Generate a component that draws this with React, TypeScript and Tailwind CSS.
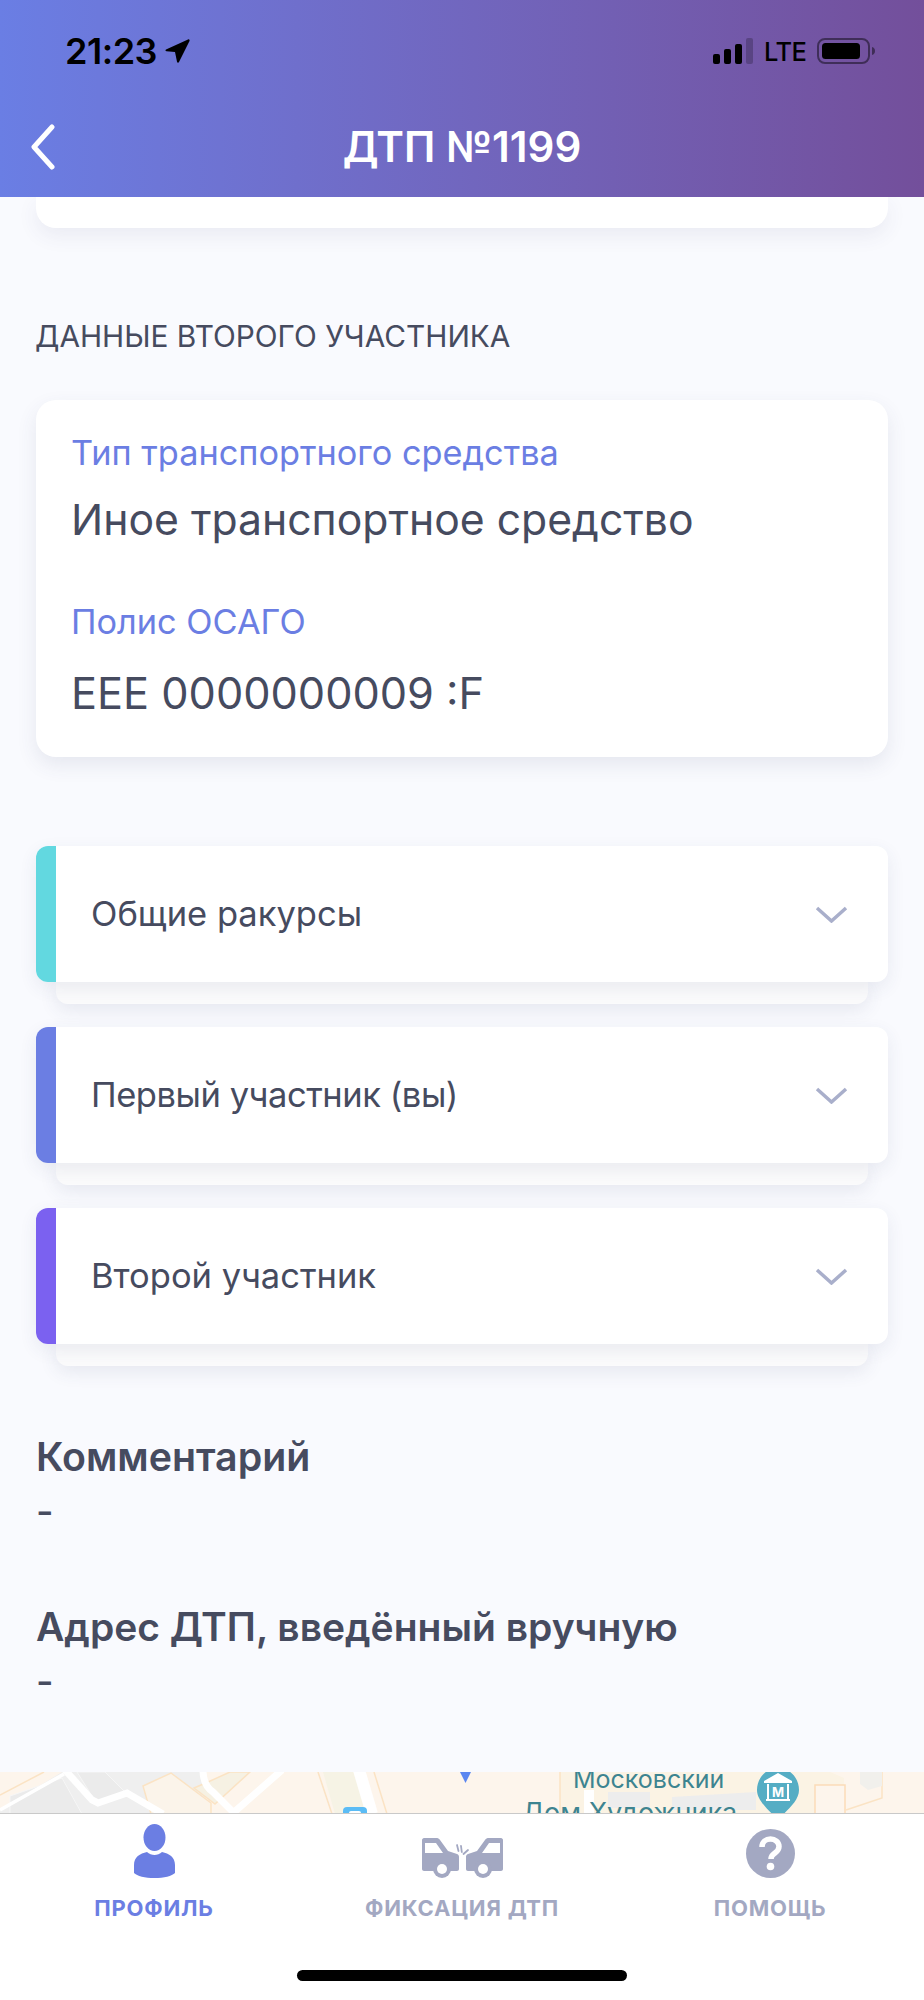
import { ReactNode } from 'react'

const PersonIcon = () => (
  <svg width="41" height="54" viewBox="0 0 41 54" fill="#6b7ee3">
    <ellipse cx="20.5" cy="13.5" rx="11" ry="13.5" />
    <path d="M13 28c2 2 5 3 7.5 3s5.500-1 7.500-3c7 1.500 13 5 13 13v8c-3 3-11 5-20.500 5S3 52 0 49v-8c0-8 6-11.500 13-13z" />
  </svg>
)

const CrashIcon = () => (
  <svg width="81" height="40" viewBox="0 0 81 40" fill="none">
    <path d="M2 0h12c2 0 3 .6 4 2l8 11 9 3c1.500.5 2 1.500 2 3v12c0 1-.8 2-2 2H2c-1 0-2-1-2-2V2c0-1 1-2 2-2z" fill="#a3a8c2" />
    <path d="M79 0H67c-2 0-3 .6-4 2l-8 11-9 3c-1.500.5-2 1.500-2 3v12c0 1 .8 2 2 2h33c1 0 2-1 2-2V2c0-1-1-2-2-2z" fill="#a3a8c2" />
    <path d="M3 5h11l7 10H3zM78 5H67l-7 10h18z" fill="#fff" />
    <circle cx="20" cy="31" r="9" fill="#a3a8c2" />
    <circle cx="20" cy="31" r="5" fill="#fff" />
    <circle cx="61" cy="31" r="9" fill="#a3a8c2" />
    <circle cx="61" cy="31" r="5" fill="#fff" />
    <path d="M35 7l1.500 6M39 8l.8 6M46 12l-4.500 4" stroke="#a3a8c2" strokeWidth="1.800" strokeLinecap="round" />
  </svg>
)

const HelpIcon = () => (
  <svg width="49" height="49" viewBox="0 0 49 49">
    <circle cx="24.500" cy="24.500" r="24.500" fill="#a3a8c2" />
    <path d="M16 18c0-5 4-8 8.500-8s8.500 3 8.500 7.500c0 3.500-2 5-4 6.500s-4 2.500-4 6" fill="none" stroke="#fff" strokeWidth="5.500" />
    <circle cx="24.500" cy="37.500" r="3.800" fill="#fff" />
  </svg>
)

const Chevron = () => (
  <svg width="33" height="17" viewBox="0 0 33 17" fill="none">
    <path d="M2 2l14.500 13L31 2" stroke="#a9afcb" strokeWidth="3.500" />
  </svg>
)

const MapStrip = () => (
  <svg width="924" height="42" viewBox="0 0 924 42" className="block">
    <rect width="924" height="42" fill="#fdf5ec" />
    <path d="M0 23L44 0" stroke="#fbe3c4" strokeWidth="1.500" fill="none" />
    {/* gray blocks */}
    <path d="M0 38L62 0h140l8 20-10 8-30-8-20 22H0z" fill="#efefef" />
    <path d="M143 14l28-13 40 30 0 11h-60z" fill="#fbf4ea" stroke="#fbe3c4" strokeWidth="1.500" />
    <path d="M208 10l22-10h20l-35 32-21-16z" fill="#f6f1e3" stroke="#fbe3c4" strokeWidth="1.500" />
    <path d="M323 0h36l14 42h-38z" fill="#f6f3e5" />
    <path d="M318 0l14 42M374 0l13 42" stroke="#fbe3c4" strokeWidth="1.500" fill="none" />
    <path d="M10 42V24L62 6l20 36zM105 0l22 22-30 10-20-32z" fill="#ebebeb" stroke="#f6f6f6" strokeWidth="1" />
    {/* roads */}
    <path d="M65 -2L92 28l6 3 29-10 36 21" stroke="#fff" strokeWidth="7" fill="none" />
    <path d="M0 38L64 2" stroke="#fff" strokeWidth="3.500" fill="none" />
    <path d="M203 -2c0 10 4 18 10 22l22 22M282 -2L232 42" stroke="#fff" strokeWidth="7" fill="none" />
    <path d="M359 -2l13 44" stroke="#fff" strokeWidth="12" fill="none" />
    {/* right part */}
    <path d="M560 0h270l14 6v36H560z" fill="#fbf3e4" />
    <rect x="608" y="20" width="42" height="16" fill="#ededed" />
    <path d="M672 25l84-5v18h-84z" fill="#ededed" />
    <path d="M815 13h30v29h-30z" fill="#fdf5ec" stroke="#fbdcb8" strokeWidth="1.500" />
    <path d="M846 38l36-12V0M560 0v42" stroke="#fbe3c4" strokeWidth="1.500" fill="none" />
    <path d="M860 0h22v14l-14 4-8-6z" fill="#f1f0ec" />
    <rect x="584" y="18" width="10" height="24" fill="#fff" />
    {/* markers */}
    <path d="M460 0h11l-5.500 11z" fill="#5b86f0" />
    <rect x="343" y="35" width="24" height="12" rx="4" fill="#5bbcf5" />
    <rect x="349" y="39" width="12" height="8" rx="2" fill="#fff" />
    <text x="573" y="16" fontFamily="Inter, sans-serif" fontSize="25" fill="#3d8490">Московский</text>
    <text x="522" y="50" fontFamily="Inter, sans-serif" fontSize="27" fill="#3d8490">Дом Художника</text>
    <path d="M778 -4c12 0 21 10 21 22 0 11-12 20-21 30-9-10-21-19-21-30 0-12 9-22 21-22z" fill="#55adc4" />
    <path d="M778 1l-14 8v2h28V9zM766 29h24v-2h-24z" fill="#fff" />
    <path d="M768 12v15M788 12v15" stroke="#fff" strokeWidth="2" />
    <text x="778" y="25" textAnchor="middle" fontFamily="Inter, sans-serif" fontSize="13" fontWeight="700" fill="#fff">М</text>
    <rect y="41" width="924" height="1" fill="#c9c9c9" />
  </svg>
)

const Accordion = ({ color, children }: { color: string; children: ReactNode }) => (
  <div className="mb-[23px]">
    <div className="relative z-10 flex h-[136px] overflow-hidden rounded-xl bg-white shadow-[0_6px_18px_rgba(60,70,110,0.09)]">
      <div className={`w-[20px] ${color}`} />
      <div className="flex flex-1 items-center justify-between pl-[35px] pr-[40px]">
        <span className="text-[34.5px] leading-[44px] text-[#464b5f]">{children}</span>
        <Chevron />
      </div>
    </div>
    <div className="mx-[20px] h-[22px] rounded-b-xl bg-[#fbfbfc] shadow-[0_6px_18px_rgba(60,70,110,0.1)]" />
  </div>
)

const NavItem = ({ icon, label, active }: { icon: ReactNode; label: string; active?: boolean }) => (
  <div className="flex flex-col items-center">
    <div className="flex h-[54px] items-end">{icon}</div>
    <span className={`mt-[16px] text-[22px] font-bold leading-[28px] tracking-[0.8px] ${active ? 'text-[#6b7ee3]' : 'text-[#a3a8c2]'}`}>
      {label}
    </span>
  </div>
)

export default function App() {
  return (
    <div className="flex h-[2000px] w-[924px] flex-col overflow-hidden bg-[#f9fafe] font-['Inter',sans-serif]">
      {/* шапка */}
      <header className="relative z-20 h-[197px] shrink-0 bg-gradient-to-r from-[#6a7ee4] to-[#734f9b]">
        <div className="flex h-[102px] items-center justify-between pb-[1px] pl-[65px] pr-[48px]">
          <div className="flex items-center gap-[8px]">
            <span className="text-[36px] font-semibold leading-none tracking-[-0.5px] text-black">21:23</span>
            <svg width="25" height="24" viewBox="0 0 25 24">
              <path d="M1 10.500L23 .5c1-.5 2 .5 1.500 1.500L14 23c-.5 1-1.800.8-2-.3L10 13 1.500 12.300C.3 12 .2 11 1 10.500z" fill="#000" />
            </svg>
          </div>
          <div className="flex items-center">
            <svg width="40" height="26" viewBox="0 0 40 26" fill="#000">
              <rect y="16" width="7" height="10" rx="2" />
              <rect x="11" y="11" width="7" height="15" rx="2" />
              <rect x="22" y="6" width="7" height="20" rx="2" />
              <rect x="33" width="7" height="26" rx="2" opacity="0.22" />
            </svg>
            <span className="ml-[11px] w-[42px] pt-[2px] text-[25.5px] font-medium leading-none tracking-[-0.6px] text-black">LTE</span>
            <svg className="ml-[11px]" width="59" height="26" viewBox="0 0 59 26">
              <rect x="1" y="1" width="51" height="24" rx="7" fill="none" stroke="#000" strokeOpacity="0.45" strokeWidth="2" />
              <rect x="5" y="5" width="38" height="16" rx="3.500" fill="#000" />
              <path d="M55 9c2 .6 3 2 3 4s-1 3.400-3 4z" fill="#000" fillOpacity="0.45" />
            </svg>
          </div>
        </div>
        <div className="relative flex h-[90px] items-center justify-center">
          <svg className="absolute left-[30px] top-[22px]" width="26" height="46" viewBox="0 0 26 46" fill="none">
            <path d="M22 3L4 23l18 20" stroke="#fff" strokeWidth="5" strokeLinecap="round" strokeLinejoin="round" />
          </svg>
          <h1 className="text-[42px] font-semibold leading-none text-white">ДТП №1199</h1>
        </div>
      </header>

      <main className="min-h-0 flex-1 overflow-hidden px-[36px]">
        <div className="h-[31px] rounded-b-[20px] bg-white shadow-[0_8px_20px_rgba(60,70,110,0.08)]" />

        <h2 className="mt-[88px] -ml-[1px] text-[29.8px] leading-[40px] text-[#464b5f]">ДАННЫЕ ВТОРОГО УЧАСТНИКА</h2>

        <section className="mt-[44px] h-[357px] rounded-[20px] bg-white px-[35px] shadow-[0_8px_20px_rgba(60,70,110,0.1)]">
          <div className="h-[178px] pt-[35px]">
            <p className="text-[34.300px] leading-[36px] text-[#6b7ee3]">Тип транспортного средства</p>
            <p className="mt-[27px] text-[42.700px] leading-[44px] text-[#464b5f]">Иное транспортное средство</p>
          </div>
          <div className="pt-[26px]">
            <p className="text-[34.300px] leading-[36px] text-[#6b7ee3]">Полис ОСАГО</p>
            <p className="mt-[31px] text-[43.300px] leading-[44px] text-[#464b5f]">EEE 0000000009 :F</p>
          </div>
        </section>

        <div className="mt-[89px]">
          <Accordion color="bg-[#62d8e0]">Общие ракурсы</Accordion>
          <Accordion color="bg-[#6b7ee3]">
            <span className="tracking-[-0.45px]">Первый участник (вы)</span>
          </Accordion>
          <Accordion color="bg-[#7b61f0]">Второй участник</Accordion>
        </div>

        <h3 className="mt-[69px] text-[39.300px] font-semibold leading-[44px] text-[#464b5f]">Комментарий</h3>
        <p className="mt-[12px] text-[38px] font-medium leading-[40px] text-[#464b5f]">-</p>
        <h3 className="mt-[74px] text-[39px] font-semibold leading-[44px] text-[#464b5f]">Адрес ДТП, введённый вручную</h3>
        <p className="mt-[12px] text-[38px] font-medium leading-[40px] text-[#464b5f]">-</p>
      </main>

      <MapStrip />

      <nav className="h-[186px] shrink-0 bg-white pt-[10px]">
        <div className="grid grid-cols-3">
          <NavItem icon={<PersonIcon />} label="ПРОФИЛЬ" active />
          <NavItem icon={<CrashIcon />} label="ФИКСАЦИЯ ДТП" />
          <NavItem icon={<HelpIcon />} label="ПОМОЩЬ" />
        </div>
        <div className="mx-auto mt-[48px] h-[11px] w-[330px] rounded-full bg-black" />
      </nav>
    </div>
  )
}
